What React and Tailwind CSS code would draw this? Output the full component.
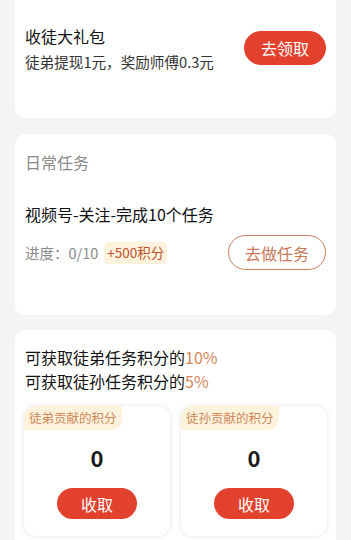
export default function App() {
  const font = { fontFamily: '"Noto Sans CJK SC", "Noto Sans", sans-serif' };
  return (
    <div className="w-[351px] h-[540px] overflow-hidden bg-[#f4f4f4]" style={font}>
      <div className="px-[15px]">
        {/* 收徒大礼包 */}
        <div className="bg-white rounded-b-[10px] h-[118px] px-[10px] flex items-center justify-between pb-[22px]">
          <div>
            <p className="text-[16px] leading-[22px] text-[#111]">收徒大礼包</p>
            <p className="text-[14.6px] leading-[20px] text-[#333] mt-[5px]">徒弟提现1元，奖励师傅0.3元</p>
          </div>
          <button className="w-[82px] h-[34px] rounded-full bg-[#e2412d] text-white text-[16px] leading-none">
            去领取
          </button>
        </div>

        {/* 日常任务 */}
        <div className="bg-white rounded-[10px] mt-[16px] h-[181px] px-[10px] pt-[17px]">
          <p className="text-[16px] leading-[22px] text-[#8a8a8a]">日常任务</p>
          <p className="text-[16px] leading-[22px] text-[#111] mt-[30px]">视频号-关注-完成10个任务</p>
          <div className="flex items-center justify-between mt-[10px]">
            <div className="flex items-center">
              <span className="text-[14.5px] text-[#8a8a8a]">进度：0/10</span>
              <span className="ml-[6px] px-[3px] h-[22px] flex items-center rounded-[5px] bg-[#fdf3dc] text-[13.5px] text-[#c2502d]">
                +500积分
              </span>
            </div>
            <button className="w-[98px] h-[35px] rounded-full border border-[#c98062] text-[#c9785a] text-[16px] leading-none">
              去做任务
            </button>
          </div>
        </div>

        {/* 徒弟积分 */}
        <div className="bg-white rounded-[10px] mt-[15px] h-[230px] px-[9px] pt-[15px]">
          <p className="px-[1px] text-[16px] leading-[24px] text-[#111]">
            可获取徒弟任务积分的<span className="text-[#d5875c]">10%</span>
          </p>
          <p className="px-[1px] text-[16px] leading-[24px] text-[#111]">
            可获取徒孙任务积分的<span className="text-[#d5875c]">5%</span>
          </p>
          <div className="grid grid-cols-2 gap-[11px] mt-[13px]">
            {["徒弟贡献的积分", "徒孙贡献的积分"].map((t) => (
              <div
                key={t}
                className="rounded-[12px] bg-white h-[130px] shadow-[0_0_5px_rgba(0,0,0,0.12)] overflow-hidden flex flex-col items-center"
              >
                <div className="self-start h-[24px] px-[5px] flex items-center bg-[#fdf3dc] rounded-br-[10px] text-[12.5px] text-[#d0875a]">
                  {t}
                </div>
                <p className="mt-[12px] text-[22px] leading-[30px] font-bold text-[#1a1a1a]">0</p>
                <button className="mt-[16px] w-[80px] h-[31px] rounded-full bg-[#e2412d] text-white text-[16px] leading-none">
                  收取
                </button>
              </div>
            ))}
          </div>
        </div>
      </div>
    </div>
  );
}
